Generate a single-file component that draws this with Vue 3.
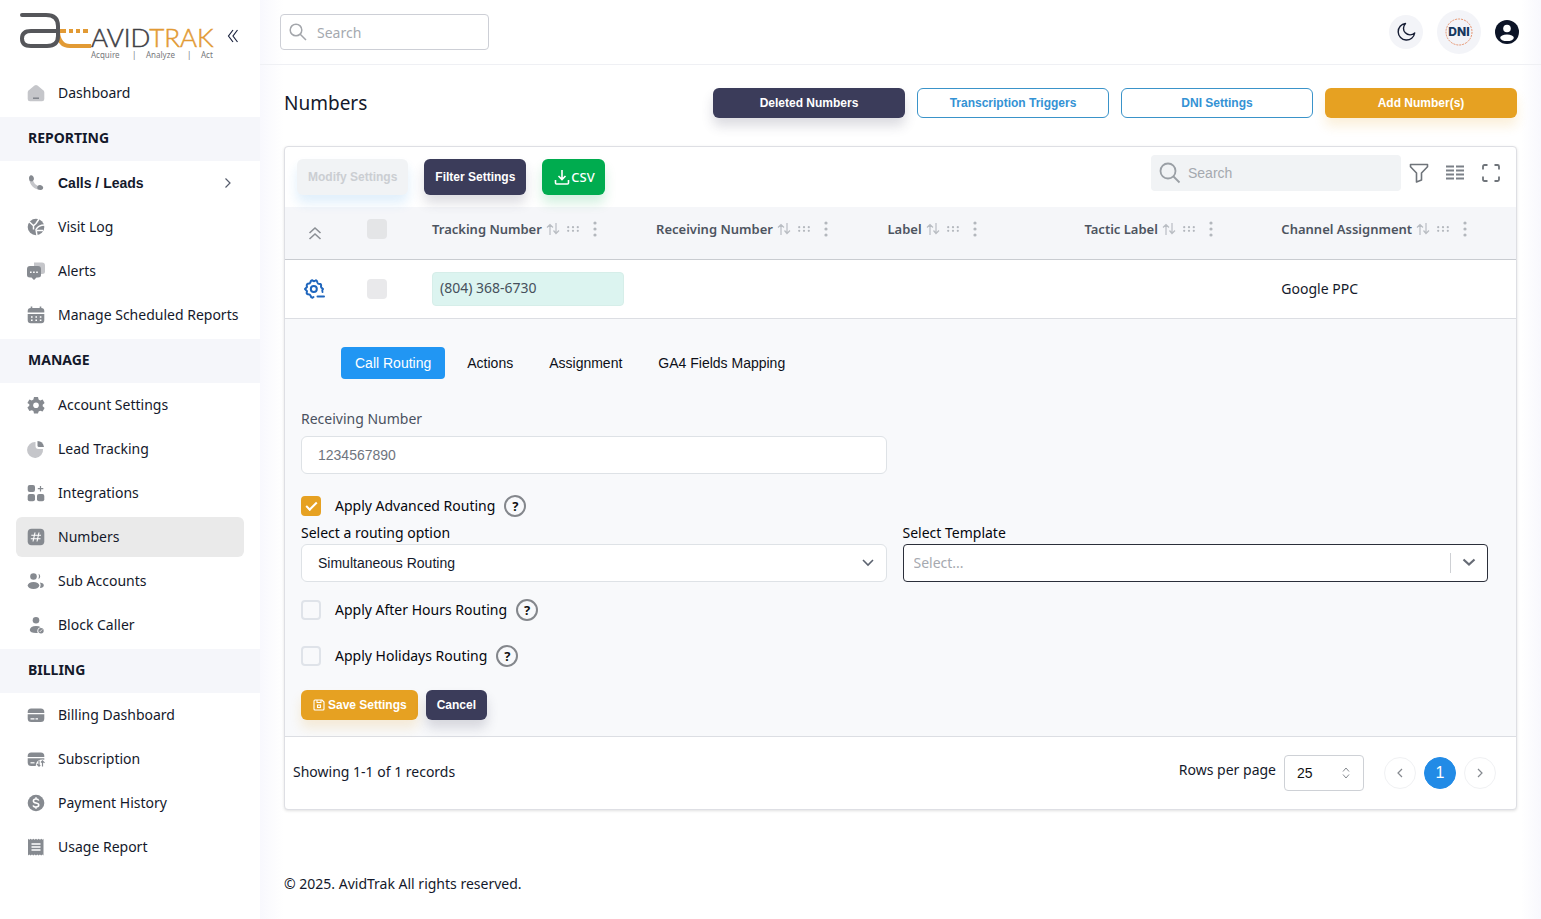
<script setup>
import { ref } from 'vue'

const icons = {
  home: '<path d="M2.5 7.500 8.500 2.600q1.500-1 3 0l6 4.900q.8.8.8 2V16q0 2.300-2.300 2.300H4Q1.700 18.300 1.700 16V9.500q0-1.200.8-2z" fill="#c5c6ca"/><path d="M7 15.200h6" stroke="#7b7f86" stroke-width="1.400"/>',
  phone: '<path d="M5 5c0 6 4 10 10 10" fill="none" stroke="#c5c6ca" stroke-width="3.400"/><path d="M4 2.800c1.700-1.200 3.200.2 3.800 2 .5 1.800-.3 3-1.800 3.600L3.800 8C2.900 6 2.500 3.900 4 2.800zM16.800 16c1.200-1.700-.2-3.200-2-3.800-1.800-.5-3 .3-3.600 1.800l.4 2.200c2 .9 4.100 1.300 5.200-.2z" fill="#868a90"/>',
  globe: '<circle cx="10" cy="10" r="8.300" fill="#868a90"/><path d="M3 4.500l4.500 4.300L10 6.500l3-4.500M7.500 9v3.500M18.500 8c-4 0-6.500 1-8.500 4.500l1 6M11 13.500h6" fill="none" stroke="#fff" stroke-width="1.500"/>',
  chat: '<path d="M8 1.500h8q3 0 3 3v6q0 2.500-3 2.500H8z" fill="#c5c6ca"/><path d="M4 5h8q3 0 3 3v6q0 2.500-3 2.500h-1.500L8 19l-2.500-2.500H4q-3 0-3-2.500V8q0-3 3-3z" fill="#868a90"/><path d="M4 11.200h8.500" stroke="#fff" stroke-width="1.500" stroke-dasharray="1.600 1.500"/>',
  calendar: '<path d="M5.500 1.500v3M14.500 1.500v3" stroke="#868a90" stroke-width="1.600"/><path d="M1.700 7.500V6q0-3 3-3h10.600q3 0 3 3v1.500zM1.700 9h16.600v6.300q0 3-3 3H4.700q-3 0-3-3z" fill="#868a90"/><path d="M5 12h11M5 15.200h11" stroke="#fff" stroke-width="1.400" stroke-dasharray="1.600 2.800"/>',
  gear: '<path d="M8 2h4l.6 2.500 1.600.9 2.400-.8 2 3.400-1.900 1.800v1.400l1.900 1.800-2 3.400-2.400-.7-1.600.9L12 18.500H8l-.6-2.400-1.600-.9-2.400.7-2-3.400 1.900-1.800V9.300L1.400 8l2-3.400 2.400.8 1.600-.9z" fill="#868a90"/><circle cx="10" cy="10.200" r="2.800" fill="#fff"/>',
  pie: '<path d="M9.500 3v4q0 3 3 3H17a8 8 0 1 1-7.500-7z" fill="#c5c6ca"/><path d="M11.500 2q5.500 0 6.500 6h-5q-1.500 0-1.500-1.500z" fill="#868a90"/>',
  grid: '<rect x="1.700" y="2" width="7.300" height="7" rx="2" fill="#868a90"/><rect x="1.700" y="11" width="7.300" height="7.300" rx="2" fill="#868a90"/><rect x="11" y="11" width="7.300" height="7.300" rx="2" fill="#868a90"/><path d="M14.500 3v5.500M11.800 5.700h5.500" stroke="#868a90" stroke-width="1.200"/>',
  hash: '<rect x="1.700" y="1.700" width="16.600" height="16.600" rx="4" fill="#868a90"/><path d="M9 5.500 7 14.500M13 5.500l-2 9M5.300 8.300h9.700M4.800 11.700h9.700" stroke="#fff" stroke-width="1.100"/>',
  users: '<circle cx="7.500" cy="5.500" r="3.300" fill="#868a90"/><ellipse cx="7.500" cy="14.500" rx="5.800" ry="3.500" fill="#868a90"/><path d="M12.500 2.800a3 3 0 0 1 0 5.400q1.200-2.700 0-5.400zM14 11.500q4 .5 3.800 3-.2 2-3.800 2.500 1.500-2.700 0-5.500z" fill="#868a90"/>',
  block: '<circle cx="10" cy="5.200" r="3.300" fill="#868a90"/><path d="M3.800 15q.5-4 6.200-4 3 0 4.800 1.200a3.800 3.800 0 0 0-3 5.800Q4 18.500 3.800 15z" fill="#868a90"/><circle cx="15" cy="15.700" r="2.700" fill="#868a90"/><path d="m13.700 17 2.600-2.600" stroke="#fff" stroke-width=".8"/>',
  card: '<path d="M1.700 8V7q0-3.500 3.500-3.500h9.600q3.500 0 3.500 3.500v1zM1.700 9.300h16.600V13.500q0 3.500-3.500 3.500H5.200q-3.500 0-3.500-3.500z" fill="#868a90"/><path d="M4.500 13.800h4M9.500 13.800h2.500" stroke="#fff" stroke-width="1.200"/>',
  subscription: '<path d="M1.700 8V7q0-3.500 3.500-3.500h9.600q3.500 0 3.500 3.500v1zM1.700 9.300h16.600v1.400q-8-1-8.600 6.300H5.200q-3.500 0-3.500-3.500z" fill="#868a90"/><path d="M4.500 13.800h4" stroke="#fff" stroke-width="1.200"/><path d="M13 11.500V17M11 15l2 2.200 1.200-1.200M16.500 17.500V12M15 13.500l1.500-1.700 2 2" fill="none" stroke="#868a90" stroke-width="1.200"/>',
  dollar: '<circle cx="10" cy="10" r="8.300" fill="#868a90"/><path d="M12.700 7.600q-.4-1.600-2.700-1.600-2.600 0-2.600 1.900 0 1.600 2.600 2.100 2.800.5 2.800 2.100 0 1.900-2.800 1.900-2.600 0-2.800-1.700M10 4.300V6M10 14v1.700" fill="none" stroke="#fff" stroke-width="1.500"/>',
  receipt: '<path d="m2 1.800 1.300 1 1.300-1 1.400 1 1.300-1 1.300 1 1.400-1 1.300 1 1.400-1 1.300 1 1.300-1 1.300 1 .9-1v16.600l-1-1-1.300 1-1.300-1-1.300 1-1.300-1-1.300 1-1.400-1-1.300 1-1.300-1-1.400 1-1.300-1-1.300 1z" fill="#868a90"/><path d="M5.500 7h9M5.500 10h9M5.500 13h9" stroke="#fff" stroke-width="1.300"/>',
}

const groups = [
  { title: '', items: [{ label: 'Dashboard', icon: 'home' }] },
  {
    title: 'REPORTING',
    items: [
      { label: 'Calls / Leads', icon: 'phone', expandable: true },
      { label: 'Visit Log', icon: 'globe' },
      { label: 'Alerts', icon: 'chat' },
      { label: 'Manage Scheduled Reports', icon: 'calendar' },
    ],
  },
  {
    title: 'MANAGE',
    items: [
      { label: 'Account Settings', icon: 'gear' },
      { label: 'Lead Tracking', icon: 'pie' },
      { label: 'Integrations', icon: 'grid' },
      { label: 'Numbers', icon: 'hash', active: true },
      { label: 'Sub Accounts', icon: 'users' },
      { label: 'Block Caller', icon: 'block' },
    ],
  },
  {
    title: 'BILLING',
    items: [
      { label: 'Billing Dashboard', icon: 'card' },
      { label: 'Subscription', icon: 'subscription' },
      { label: 'Payment History', icon: 'dollar' },
      { label: 'Usage Report', icon: 'receipt' },
    ],
  },
]

const columns = ['Tracking Number', 'Receiving Number', 'Label', 'Tactic Label', 'Channel Assignment']
const tabs = ['Call Routing', 'Actions', 'Assignment', 'GA4 Fields Mapping']
const activeTab = ref('Call Routing')
const advanced = ref(true)
const afterHours = ref(false)
const holidays = ref(false)
</script>

<template>
  <div class="app">
    <aside class="sidebar">
      <div class="brand">
        <a href="#" class="logo" aria-label="AvidTrak">
          <svg width="200" height="52" viewBox="18 10 200 52">
            <g fill="none" stroke-width="4">
              <path d="M60 31H90" stroke="#e29a34" stroke-dasharray="6 3 4 3 4 3 5 9" />
              <path d="M58 32Q59 46 70 46H91" stroke="#e29a34" />
              <path d="M22 15H46Q58 15 58 26V36Q58 46 47 46H31Q22 46 22 38.500T31 31H58" stroke="#55565a" stroke-linecap="round" />
            </g>
            <text x="91" y="47" class="logo-name">AVID<tspan class="logo-accent">TRAK</tspan></text>
            <g class="logo-tag">
              <text x="91" y="58">Acquire</text><text x="132" y="58">|</text>
              <text x="146" y="58">Analyze</text><text x="187" y="58">|</text>
              <text x="201" y="58">Act</text>
            </g>
          </svg>
        </a>
        <button class="collapse" aria-label="Collapse menu">
          <svg width="12" height="16" viewBox="0 0 12 16" fill="none" stroke="#1d2540" stroke-width="1.200"><path d="M6 2 1.500 8 6 14M10.500 2 6 8l4.500 6" /></svg>
        </button>
      </div>
      <nav>
        <section v-for="g in groups" :key="g.title">
          <h2 v-if="g.title" class="group-title">{{ g.title }}</h2>
          <ul class="menu">
            <li v-for="i in g.items" :key="i.label">
              <a href="#" class="item" :class="{ active: i.active, strong: i.expandable }">
                <svg width="20" height="20" viewBox="0 0 20 20" v-html="icons[i.icon]"></svg>
                <span>{{ i.label }}</span>
                <svg v-if="i.expandable" class="chevron" width="8" height="12" viewBox="0 0 8 12" fill="none" stroke="#555b6b" stroke-width="1.200"><path d="m1.500 1.500 4.500 4.500-4.500 4.500" /></svg>
              </a>
            </li>
          </ul>
        </section>
      </nav>
    </aside>

    <div class="main">
      <header class="topbar">
        <label class="search top-search">
          <svg width="18" height="18" viewBox="0 0 18 18" fill="none" stroke="#a3a6ab" stroke-width="1.500"><circle cx="7" cy="7" r="5.800" /><path d="m11.200 11.200 5.800 5.800" /></svg>
          <input type="search" placeholder="Search" aria-label="Search" />
        </label>
        <div class="top-actions">
          <button class="round moon" aria-label="Dark mode">
            <svg width="20" height="20" viewBox="0 0 20 20" fill="none" stroke="#151c33" stroke-width="1.400" stroke-linejoin="round"><path d="M9.500 1.500A8.300 8.300 0 1 0 18.700 11 6.600 6.600 0 0 1 9.500 1.500z" /></svg>
          </button>
          <button class="round dni" aria-label="DNI">
            <svg width="32" height="32" viewBox="0 0 32 32"><circle cx="16" cy="16" r="13" fill="none" stroke="#e6936e" stroke-dasharray="2 1" /><text x="16" y="20" text-anchor="middle" class="dni-text">DNI</text></svg>
          </button>
          <button class="round avatar" aria-label="Profile">
            <svg width="24" height="24" viewBox="0 0 24 24"><circle cx="12" cy="12" r="12" fill="#0c1427" /><circle cx="12" cy="8.500" r="3.800" fill="#fff" /><ellipse cx="12" cy="17.800" rx="6.800" ry="3.300" fill="#fff" /></svg>
          </button>
        </div>
      </header>

      <main class="content">
        <div class="title-row">
          <h1>Numbers</h1>
          <div class="title-actions">
            <button class="btn dark">Deleted Numbers</button>
            <button class="btn outline">Transcription Triggers</button>
            <button class="btn outline">DNI Settings</button>
            <button class="btn amber">Add Number(s)</button>
          </div>
        </div>

        <div class="card">
          <div class="toolbar">
            <button class="btn tall disabled" disabled>Modify Settings</button>
            <button class="btn tall dark">Filter Settings</button>
            <button class="btn tall green">
              <svg width="16" height="16" viewBox="0 0 16 16" fill="none" stroke="#fff" stroke-width="1.600"><path d="M8 1v9M4.500 7 8 10.500 11.500 7M1.500 11v3q0 1 1 1h11q1 0 1-1v-3" /></svg>CSV
            </button>
            <label class="search table-search">
              <svg width="22" height="22" viewBox="0 0 22 22" fill="none" stroke="#9a9fa5" stroke-width="1.800"><circle cx="9" cy="9" r="7.500" /><path d="m14.500 14.500 6 6" /></svg>
              <input type="search" placeholder="Search" aria-label="Search table" />
            </label>
            <div class="tools">
              <button aria-label="Filters"><svg width="20" height="20" viewBox="0 0 20 20" fill="none" stroke="#6f747a" stroke-width="1.600" stroke-linejoin="round"><path d="M1.500 1.500h17v2.200L12.500 10v7l-5 2v-9L1.500 3.700z" /></svg></button>
              <button aria-label="Density"><svg width="20" height="20" viewBox="0 0 20 20" stroke="#7b8087" stroke-width="1.800"><path d="M1 3.500h8M11 3.500h8M1 7.500h8M11 7.500h8M1 11.500h8M11 11.500h8M1 15.500h8M11 15.500h8" /></svg></button>
              <button aria-label="Full screen"><svg width="20" height="20" viewBox="0 0 20 20" fill="none" stroke="#6f747a" stroke-width="1.800"><path d="M2 6.500v-3q0-1.500 1.500-1.500h3M13.500 2h3q1.500 0 1.500 1.500v3M18 13.500v3q0 1.500-1.500 1.500h-3M6.500 18h-3q-1.500 0-1.500-1.500v-3" /></svg></button>
            </div>
          </div>

          <table>
            <colgroup><col class="c-gear" /><col class="c-check" /><col class="c-track" /><col class="c-recv" /><col class="c-label" /><col class="c-label" /><col /></colgroup>
            <thead>
              <tr>
                <th class="center"><button class="icon-btn" aria-label="Collapse all"><svg width="14" height="14" viewBox="0 0 14 14" fill="none" stroke="#8b8f95" stroke-width="1.600"><path d="m1.500 7 5.500-5 5.500 5M1.500 13 7 8l5.500 5" /></svg></button></th>
                <th><input type="checkbox" class="row-check head-check" aria-label="Select all" /></th>
                <th v-for="c in columns" :key="c">
                  <div class="th">
                    <span>{{ c }}</span>
                    <svg class="sort" width="14" height="12" viewBox="0 0 14 12" fill="none" stroke="#b9bdc3" stroke-width="1.200"><path d="M4 12V1.500M1 4.500l3-3 3 3M10 0v10.500M7.500 7.500l2.500 3 3-3" /></svg>
                    <svg class="grip" width="12" height="6" viewBox="0 0 12 6" fill="#b3b7bd"><circle cx="1.200" cy="1.200" r="1.100" /><circle cx="6" cy="1.200" r="1.100" /><circle cx="10.800" cy="1.200" r="1.100" /><circle cx="1.200" cy="4.800" r="1.100" /><circle cx="6" cy="4.800" r="1.100" /><circle cx="10.800" cy="4.800" r="1.100" /></svg>
                    <svg class="dots" width="4" height="16" viewBox="0 0 4 16" fill="#b3b7bd"><circle cx="2" cy="2" r="1.600" /><circle cx="2" cy="8" r="1.600" /><circle cx="2" cy="14" r="1.600" /></svg>
                  </div>
                </th>
              </tr>
            </thead>
            <tbody>
              <tr class="data-row">
                <td class="center edit-cell"><button class="icon-btn" aria-label="Edit number"><svg width="22" height="22" viewBox="0 0 22 22" fill="none" stroke="#1f66bd" stroke-width="2" stroke-linecap="round" stroke-linejoin="round"><path d="M19.500 14q-1-1.500.5-3-2-1.500-2-2 .5-2.500-.7-3-2.300.3-2.800-1.200Q14 2.500 13 2.300 11 4 9.500 2.300q-2 .2-2 2Q7 6 4.500 5.800 3.300 6.500 4 9L2 11l2 2.200q-.8 2.400.5 3 2.500-.2 3 1.300.3 2 2 2.200l1-.7" /><circle cx="10.800" cy="11" r="3" /><path d="M14.500 18.500h6.500" /></svg></button></td>
                <td><input type="checkbox" class="row-check" aria-label="Select (804) 368-6730" /></td>
                <td><div class="number">(804) 368-6730</div></td>
                <td></td><td></td><td></td>
                <td>Google PPC</td>
              </tr>
              <tr class="detail-row">
                <td colspan="7">
                  <div class="tabs" role="tablist">
                    <button v-for="t in tabs" :key="t" role="tab" class="tab" :class="{ on: t === activeTab }" :aria-selected="t === activeTab" @click="activeTab = t">{{ t }}</button>
                  </div>
                  <div class="fields">
                    <div class="field receiving">
                      <label for="recv" class="muted">Receiving Number</label>
                      <input id="recv" class="control" type="text" placeholder="1234567890" />
                    </div>
                  </div>
                  <div class="check-line first">
                    <input id="adv" v-model="advanced" type="checkbox" /><label for="adv">Apply Advanced Routing</label><button class="help" aria-label="About advanced routing">?</button>
                  </div>
                  <div class="fields">
                    <div class="field">
                      <label for="routing">Select a routing option</label>
                      <div class="select-wrap">
                        <select id="routing" class="control"><option>Simultaneous Routing</option></select>
                        <svg class="caret" width="12" height="8" viewBox="0 0 12 8" fill="none" stroke="#5c6370" stroke-width="1.600"><path d="m1 1 5 5 5-5" /></svg>
                      </div>
                    </div>
                    <div class="field">
                      <label for="template">Select Template</label>
                      <div class="combo">
                        <input id="template" type="text" role="combobox" aria-expanded="false" placeholder="Select..." />
                        <button aria-label="Show templates"><svg width="14" height="9" viewBox="0 0 14 9" fill="none" stroke="#666b75" stroke-width="2.200"><path d="m1.500 1.500 5.500 5 5.500-5" /></svg></button>
                      </div>
                    </div>
                  </div>
                  <div class="check-line">
                    <input id="after" v-model="afterHours" type="checkbox" /><label for="after">Apply After Hours Routing</label><button class="help" aria-label="About after hours routing">?</button>
                  </div>
                  <div class="check-line">
                    <input id="hol" v-model="holidays" type="checkbox" /><label for="hol">Apply Holidays Routing</label><button class="help" aria-label="About holidays routing">?</button>
                  </div>
                  <div class="form-actions">
                    <button class="btn amber small">
                      <svg width="12" height="12" viewBox="0 0 12 12" fill="none" stroke="#fff" stroke-width="1.100"><path d="M1 2q0-1 1-1h7l2 2v7q0 1-1 1H2q-1 0-1-1zM4 1v2.500h4V1" /><rect x="4.500" y="6" width="3" height="2.500" /></svg>Save Settings
                    </button>
                    <button class="btn dark small">Cancel</button>
                  </div>
                </td>
              </tr>
            </tbody>
          </table>

          <div class="table-foot">
            <span>Showing 1-1 of 1 records</span>
            <div class="pager">
              <label for="rows">Rows per page</label>
              <div class="rows-wrap">
                <select id="rows"><option>25</option></select>
                <svg class="rows-caret" width="8" height="12" viewBox="0 0 8 12" fill="none" stroke="#85898f"><path d="M1 4.500 4 1l3 3.500M1 7.500 4 11l3-3.500" /></svg>
              </div>
              <button class="page" aria-label="Previous page"><svg width="6" height="10" viewBox="0 0 6 10" fill="none" stroke="#85898f" stroke-width="1.200"><path d="M5 1 1 5l4 4" /></svg></button>
              <button class="page current">1</button>
              <button class="page" aria-label="Next page"><svg width="6" height="10" viewBox="0 0 6 10" fill="none" stroke="#85898f" stroke-width="1.200"><path d="m1 1 4 4-4 4" /></svg></button>
            </div>
          </div>
        </div>
      </main>
      <footer>© 2025. AvidTrak All rights reserved.</footer>
    </div>
  </div>
</template>

<style>
body { margin: 0; }
</style>

<style scoped>
* { box-sizing: border-box; }
.app { display: flex; min-height: 100vh; background: #fff; color: #14192b; font: 14px/20px "Noto Sans", sans-serif; }
button, input, select { font-family: "Liberation Sans", Arial, sans-serif; font-size: 14px; }
button { border: 0; background: none; padding: 0; cursor: pointer; }
svg { display: block; flex: none; }
a { color: inherit; text-decoration: none; }

.sidebar { width: 260px; flex: none; background: #fff; }
.brand { display: flex; align-items: center; gap: 9px; height: 71px; padding-left: 18px; }
.logo-name { font: 300 26px Lato, sans-serif; fill: #3f4045; stroke: #3f4045; stroke-width: 0.5; }
.logo-accent { fill: #e29a34; stroke: #e29a34; }
.logo-tag { font: 8px "Noto Sans", sans-serif; fill: #77787c; }
.group-title { margin: 0; padding: 0 28px; font-size: 14px; line-height: 42px; height: 44px; font-weight: 700; background: #f5f6fa; }
.menu { list-style: none; margin: 0; padding: 2px 16px 4px; display: grid; gap: 4px; }
.item { display: flex; align-items: center; gap: 12px; height: 40px; padding: 0 8px 0 10px; border-radius: 6px; }
.item span { flex: 1; white-space: nowrap; padding-bottom: 1px; }
.item.active { background: #eaeaea; }
.item.strong { font-family: "Liberation Sans", Arial, sans-serif; font-weight: 700; padding-right: 14px; }
.chevron { margin-right: 0; }

.main { flex: 1; min-width: 0; background: linear-gradient(90deg, #f8f8fd, #fff 24px, #fff calc(100% - 20px), #f8f8fd); }
.topbar { display: flex; align-items: center; justify-content: space-between; height: 65px; padding: 0 22px 0 20px; border-bottom: 1px solid #eff0f4; }
.search { display: flex; align-items: center; height: 36px; border-radius: 4px; }
.search input { flex: 1; min-width: 0; border: 0; outline: 0; background: none; padding: 0; color: #333; }
.search input::placeholder { color: #a5a9af; }
.top-search { width: 209px; padding: 0 8px; gap: 10px; border: 1px solid #cdcfd6; background: #fff; }
.top-search input { font-family: "Noto Sans", sans-serif; }
.top-actions { display: flex; align-items: center; gap: 14px; }
.round { display: grid; place-items: center; border-radius: 50%; }
.moon { width: 34px; height: 34px; background: #f3f4f8; }
.dni { width: 44px; height: 44px; background: #f3f4f8; }
.dni-text { font: 800 12px Inter, sans-serif; fill: #16385f; }

.content { padding: 23px 24px 0; }
.title-row { display: flex; align-items: center; justify-content: space-between; gap: 24px; }
h1 { margin: 0; font-size: 19px; line-height: 28px; font-weight: 400; }
.title-actions { display: grid; grid-template-columns: repeat(4, 1fr); gap: 12px; flex: 0 1 804px; }
.btn { height: 30px; border-radius: 6px; font-size: 12px; font-weight: 700; color: #fff; white-space: nowrap; }
.dark { background: #3b3c5a; box-shadow: 0 8px 12px rgba(59, 60, 90, 0.18); }
.amber { background: #e6a122; box-shadow: 0 8px 12px rgba(230, 161, 34, 0.16); }
.outline { background: #fff; border: 1px solid #3a93c9; color: #3492d4; }
.green { background: #00ac4f; box-shadow: 0 8px 12px rgba(0, 172, 79, 0.18); }
.disabled { background: #f1f3f5; color: #cbced2; box-shadow: 0 8px 12px rgba(34, 139, 230, 0.14); }

.card { margin-top: 28px; border: 1px solid #dedfe4; border-radius: 4px; box-shadow: 0 1px 3px rgba(0, 0, 0, 0.12); background: #fff; }
.toolbar { display: flex; align-items: center; gap: 16px; height: 60px; padding: 0 7px 0 12px; }
.tall { height: 36px; padding: 0 11px; }
.tall.green { display: flex; align-items: center; gap: 1px; padding: 0 10px 0 12px; font: 500 13px "Noto Sans", sans-serif; color: #fff; }
.table-search { width: 250px; margin: -8px -16px 0 auto; padding: 0 8px; gap: 7px; background: #f1f3f5; }
.tools { display: flex; margin-top: -8px; }
.tools button { width: 36px; height: 36px; display: grid; place-items: center; }

table { width: 100%; border-collapse: collapse; table-layout: fixed; }
.c-gear { width: 60px; }
.c-check { width: 71px; }
.c-track { width: 18.2%; }
.c-recv { width: 18.8%; }
.c-label { width: 16%; }
th { height: 52px; padding: 0 0 0 16px; text-align: left; vertical-align: middle; background: #f5f6f9; border-bottom: 1px solid #c9ccd1; }
td { padding: 0 16px; text-align: left; }
.center { padding: 0; }
.center .icon-btn { margin: 0 auto; display: block; }
.th { display: flex; align-items: center; color: #4d5460; font-weight: 600; line-height: 20px; padding-bottom: 8px; white-space: nowrap; font-size: 13px; }
.sort { margin: 1px 0 0 4px; }
.grip { margin: 1px 0 0 7px; }
.dots { margin: 1px 0 0 14px; }
.row-check { appearance: none; display: block; width: 20px; height: 20px; margin: 0 0 0 6px; border-radius: 4px; background: #e9e9eb; }
.head-check { background: #e4e5e7; margin-bottom: 8px; }
.data-row td { height: 59px; border-bottom: 1px solid #dcdee3; }
.data-row td.edit-cell { padding: 0 3px 0 0; }
.number { height: 34px; line-height: 30px; padding: 0 7px; border: 1px solid #d6eee9; border-radius: 4px; background: #dcf4f0; color: #46505c; }
.detail-row td { background: #f8f9fb; border-bottom: 1px solid #dcdee3; padding: 28px 28px 16px 16px; }
.tabs { display: flex; gap: 8px; padding-left: 40px; }
.tab { height: 32px; padding: 0 14px; border-radius: 4px; color: #0d1018; }
.tab.on { background: #2196f3; color: #fff; }
.fields { display: grid; grid-template-columns: 1fr 1fr; gap: 16px; }
.field { display: flex; flex-direction: column; gap: 1px; }
.receiving { margin-top: 30px; gap: 7px; }
.muted { color: #4a5160; }
.control { width: 100%; height: 38px; padding: 0 16px; border: 1px solid #dee2e6; border-radius: 6px; background: #fff; color: #14192b; appearance: none; display: block; }
.control::placeholder { color: #6f757e; }
.select-wrap, .rows-wrap { display: grid; align-items: center; }
.select-wrap > *, .rows-wrap > * { grid-area: 1 / 1; }
.caret { justify-self: end; margin-right: 13px; pointer-events: none; }
.combo { display: flex; align-items: center; height: 38px; border: 1px solid #2b2f3a; border-radius: 4px; background: #fff; }
.combo input { flex: 1; min-width: 0; border: 0; outline: 0; background: none; padding: 0 10px; font-family: "Noto Sans", sans-serif; }
.combo input::placeholder { color: #a6a9b0; }
.combo button { width: 37px; height: 20px; border-left: 1px solid #ced0d4; display: grid; place-items: center; }
.field label:not(.muted), .check-line label { color: #05070d; }
.check-line { display: flex; align-items: center; height: 22px; margin-top: 17px; }
.check-line + .check-line { margin-top: 24px; }
.check-line.first { margin: 21px 0 6px; }
.check-line label { margin: 0 9px 0 14px; }
.check-line input { appearance: none; width: 20px; height: 20px; margin: 0; border: 2px solid #dfe3e9; border-radius: 4px; display: grid; place-items: center; }
.check-line input:checked { border-color: #e6a122; background: #e6a122; }
.check-line input:checked::before { content: ""; width: 9px; height: 4px; margin-top: -2px; border: solid #fff; border-width: 0 0 2px 2px; transform: rotate(-45deg); }
.help { width: 22px; height: 22px; border: 2px solid #84878c; border-radius: 50%; font: 700 13px/18px "Noto Sans", sans-serif; color: #111; }
.form-actions { display: flex; gap: 8px; margin-top: 23px; }
.small { display: flex; align-items: center; gap: 3px; padding: 0 11px; }
.amber.small { padding-left: 12px; }
.table-foot { display: flex; align-items: center; justify-content: space-between; height: 72px; padding: 0 20px 0 8px; }
.table-foot > span { padding-bottom: 1px; }
.pager { display: flex; align-items: center; gap: 8px; }
.pager label { padding-bottom: 6px; }
.rows-wrap { margin-right: 12px; }
.rows-wrap select { width: 80px; height: 36px; padding: 0 12px; border: 1px solid #ced1d6; border-radius: 4px; background: #fff; appearance: none; color: #111; }
.rows-caret { justify-self: end; margin-right: 14px; pointer-events: none; }
.page { width: 32px; height: 32px; display: grid; place-items: center; border: 1px solid #f0f1f3; border-radius: 50%; background: #fff; }
.page.current { background: #228be6; border-color: #228be6; color: #fff; font-size: 16px; }
footer { padding: 64px 24px 24px; }
</style>
